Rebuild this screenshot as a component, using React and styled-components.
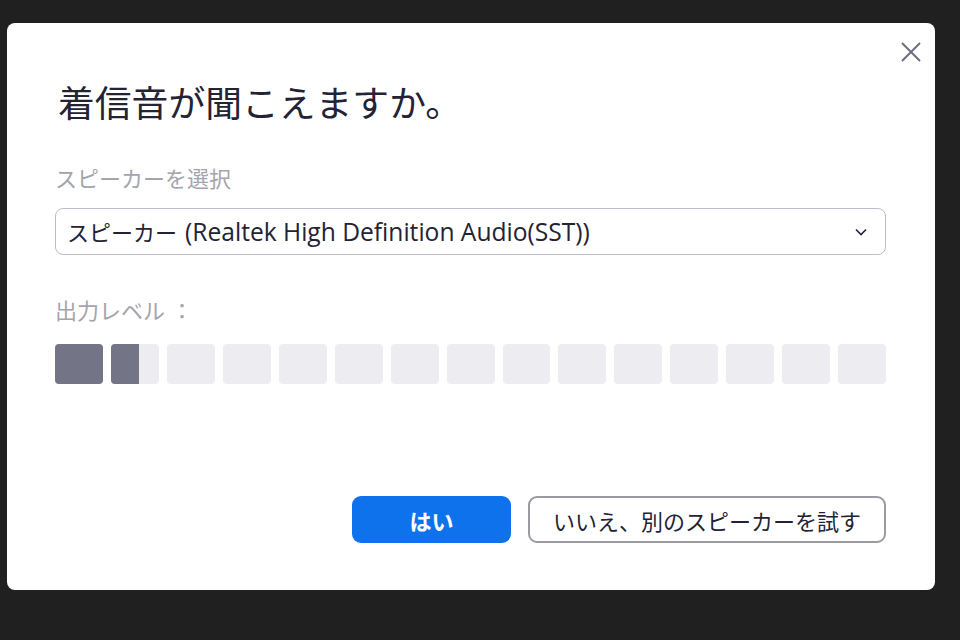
import React from 'react';
import styled, { createGlobalStyle } from 'styled-components';

const GlobalStyle = createGlobalStyle`
  html, body {
    margin: 0;
    padding: 0;
    background: #202020;
    font-family: "Noto Sans CJK JP", "Noto Sans", "Liberation Sans", sans-serif;
  }
`;

const Screen = styled.div`
  width: 960px;
  height: 640px;
  padding: 23px 0 0 7px;
  box-sizing: border-box;
`;

const Dialog = styled.div`
  position: relative;
  width: 928px;
  height: 567px;
  box-sizing: border-box;
  background: #fff;
  border-radius: 8px;
  padding: 0 49px 0 48px;
  display: flex;
  flex-direction: column;
`;

const CloseButton = styled.button`
  position: absolute;
  top: 17px;
  right: 12px;
  width: 24px;
  height: 24px;
  padding: 0;
  border: 0;
  background: none;
  display: flex;
  align-items: center;
  justify-content: center;
`;

const Title = styled.h1`
  margin: 54px 0 0 3px;
  font-size: 36.8px;
  line-height: 48px;
  font-weight: 400;
  color: #232333;
`;

const Label = styled.div`
  margin-top: ${(p) => p.$top}px;
  font-size: 22px;
  line-height: 30px;
  color: #a4a4ac;
`;

const Colon = styled.span`
  margin-left: 6px;
`;

const Select = styled.div`
  margin-top: 16px;
  height: 47px;
  box-sizing: border-box;
  border: 1px solid #bdbdc7;
  border-radius: 8px;
  display: flex;
  align-items: center;
  padding: 0 18px 0 11px;
  font-size: 22px;
  color: #232333;
`;

const SelectText = styled.span`
  flex: 1;
  white-space: nowrap;
`;

const DeviceName = styled.span`
  font-family: "Open Sans", "Noto Sans CJK JP", sans-serif;
  font-size: 24.6px;
  font-weight: 400;
  margin-left: 8px;
`;

const Bars = styled.div`
  margin-top: 20px;
  display: flex;
  gap: 8px;
`;

const Bar = styled.div`
  width: 48px;
  height: 40px;
  border-radius: 4px;
  overflow: hidden;
  background: #ededf1;
  display: flex;
`;

const BarFill = styled.div`
  height: 100%;
  background: #747487;
`;

const Actions = styled.div`
  margin-top: 112px;
  display: flex;
  justify-content: flex-end;
  gap: 17px;
`;

const Button = styled.button`
  height: 47px;
  box-sizing: border-box;
  border-radius: 9px;
  font-family: inherit;
  font-size: 22px;
  padding: 0;
  display: flex;
  align-items: center;
  justify-content: center;
  width: ${(p) => p.$width}px;
  background: ${(p) => (p.$primary ? '#0e72ed' : '#fff')};
  color: ${(p) => (p.$primary ? '#fff' : '#232333')};
  border: ${(p) => (p.$primary ? '0' : '2px solid #9a9aa2')};
  font-weight: ${(p) => (p.$primary ? 700 : 400)};
`;

const levels = [1, 0.58, 0, 0, 0, 0, 0, 0, 0, 0, 0, 0, 0, 0, 0];

export default function App() {
  return (
    <Screen>
      <GlobalStyle />
      <Dialog>
        <CloseButton aria-label="閉じる">
          <svg width="22" height="22" viewBox="0 0 22 22">
            <path d="M2 2 L20 20 M20 2 L2 20" stroke="#6e6e80" strokeWidth="2" fill="none" />
          </svg>
        </CloseButton>
        <Title>着信音が聞こえますか。</Title>
        <Label $top={37}>スピーカーを選択</Label>
        <Select>
          <SelectText>
            スピーカー<DeviceName>(Realtek High Definition Audio(SST))</DeviceName>
          </SelectText>
          <svg width="12" height="8" viewBox="0 0 12 8">
            <path d="M1 1.5 L6 6.5 L11 1.5" stroke="#232333" strokeWidth="1.6" fill="none" />
          </svg>
        </Select>
        <Label $top={39}>出力レベル<Colon>：</Colon></Label>
        <Bars>
          {levels.map((v, i) => (
            <Bar key={i}>
              <BarFill style={{ width: `${v * 100}%` }} />
            </Bar>
          ))}
        </Bars>
        <Actions>
          <Button $primary $width={159}>はい</Button>
          <Button $width={358}>いいえ、別のスピーカーを試す</Button>
        </Actions>
      </Dialog>
    </Screen>
  );
}
